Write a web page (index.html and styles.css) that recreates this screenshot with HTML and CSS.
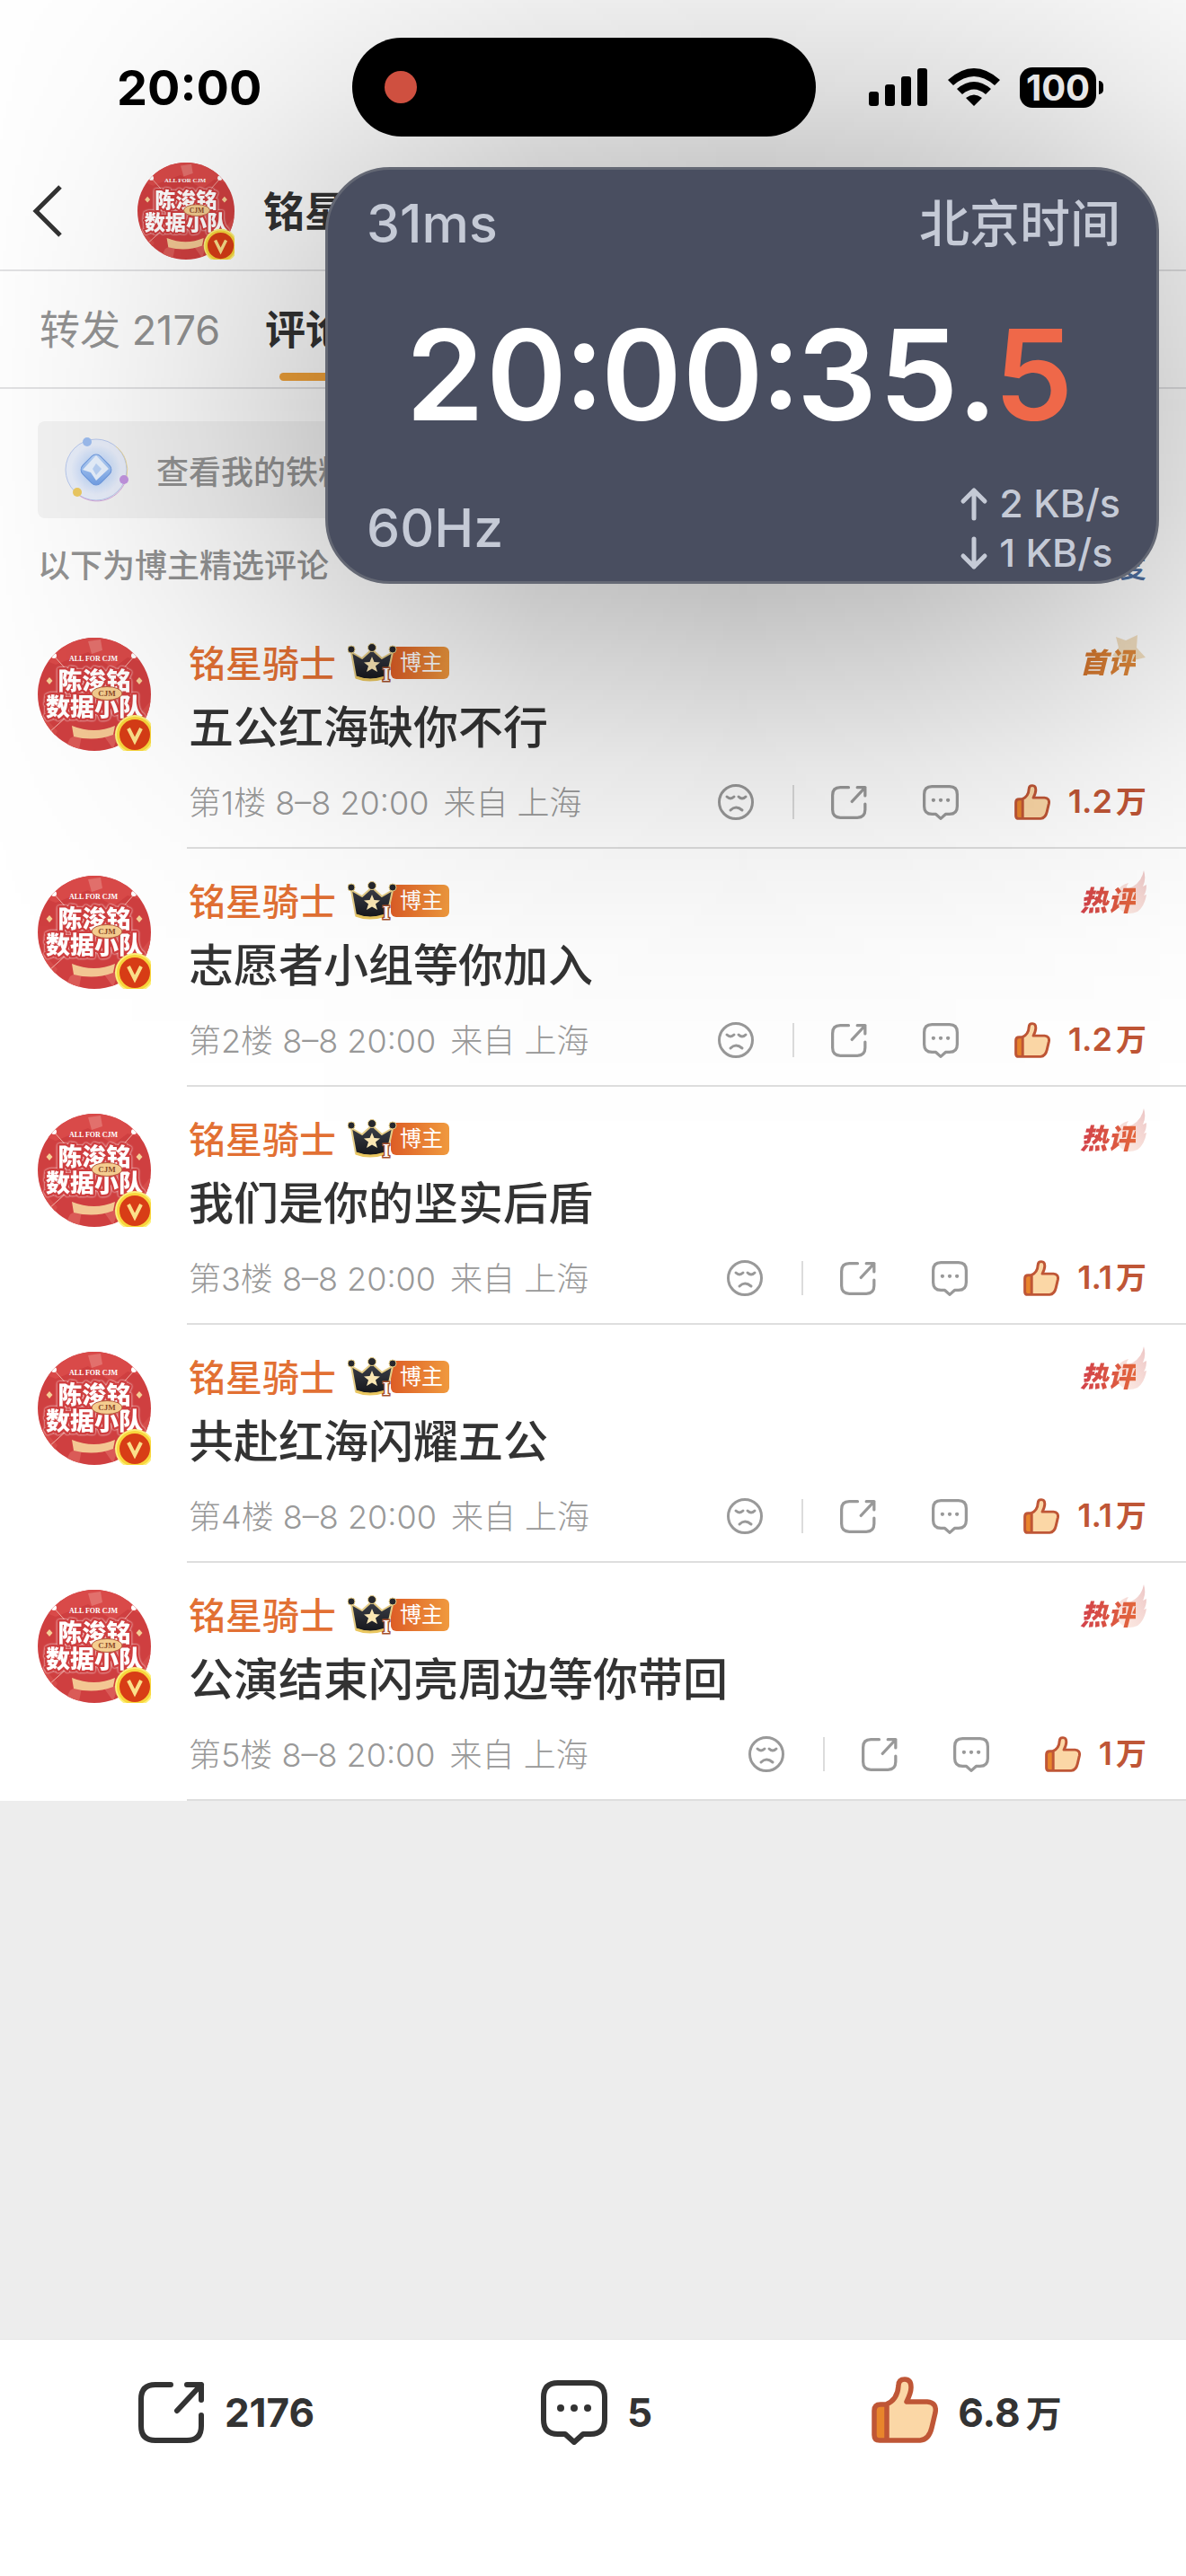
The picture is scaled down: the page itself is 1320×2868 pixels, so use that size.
FILE: index.html
```html
<!DOCTYPE html>
<html lang="zh-CN">
<head>
<meta charset="utf-8">
<meta name="viewport" content="width=device-width, initial-scale=1">
<title>评论</title>
<link rel="stylesheet" href="styles.css">
</head>
<body>
<svg class="sprite" aria-hidden="true">
  <defs>
    <linearGradient id="crownFill" x1="0" y1="0" x2="0" y2="1"><stop offset="0" stop-color="#3d4049"/><stop offset="1" stop-color="#15161b"/></linearGradient>
    <linearGradient id="flameFill" x1="1" y1="0" x2="0" y2="1"><stop offset="0" stop-color="#d98a8a" stop-opacity=".5"/><stop offset="1" stop-color="#f7b9a0" stop-opacity=".25"/></linearGradient>
    <linearGradient id="gemFill" x1="0" y1="0" x2="1" y2="1"><stop offset="0" stop-color="#c3dcfb"/><stop offset="1" stop-color="#6d9de8"/></linearGradient>
    <radialGradient id="gemGlow"><stop offset="0" stop-color="#8cb4f5"/><stop offset=".6" stop-color="#cfdff8"/><stop offset="1" stop-color="#e8eefa"/></radialGradient>
    <clipPath id="avatarClip"><circle cx="63" cy="63" r="63"/></clipPath>
  </defs>
  <symbol id="avatar" viewBox="0 0 126 126">
    <g clip-path="url(#avatarClip)">
      <rect width="126" height="126" fill="#cf3f40"/>
      <path d="M0 0H126V30L100 22 84 34 56 16 20 30 0 22Z" fill="#d94a49"/>
      <path d="M56 4 70 2 72 14 60 18Z" fill="#e2706c"/>
      <path d="M0 80 22 104 10 126H0ZM126 70 104 96 126 110Z" fill="#d64c4a"/>
      <path d="M36 112 50 104 46 124 32 120ZM74 110 90 106 84 124Z" fill="#da5b57"/>
      <path d="M16 18 34 38M108 20 92 38M12 106 32 88" stroke="#f0b3a8" stroke-width="1" fill="none"/>
      <circle cx="18" cy="20" r="3" fill="#fff"/><circle cx="107" cy="20" r="3" fill="#fff"/>
      <path d="M13 44 16.500 48 13 52 9.500 48ZM113 44 116.500 48 113 52 109.500 48Z" fill="#f5cf96"/>
      <g class="avatar-title"><text x="63" y="58" font-size="27">陈浚铭</text><text x="63" y="87" font-size="27">数据小队</text></g>
      <text x="62" y="26" class="avatar-latin" font-size="8" fill="#fff">ALL FOR CJM</text>
      <path d="M38 98Q63 108 86 98L84 108Q63 116 40 110Z" fill="#f3c793"/>
    </g>
    <ellipse cx="77" cy="62" rx="17" ry="7.500" fill="#f4cd8f" stroke="#b5573b" stroke-width="1"/>
    <text x="77" y="65" class="avatar-latin" font-size="9" fill="#8d4b2a">CJM</text>
    <circle cx="108" cy="108" r="22" fill="#fdf07c"/>
    <circle cx="108" cy="108" r="20" fill="#f8d63d"/>
    <circle cx="108" cy="108" r="17" fill="#d83d16"/>
    <path d="M101 101 108 115 115 101" fill="none" stroke="#fbe08a" stroke-width="4"/>
  </symbol>
  <symbol id="crown" viewBox="0 0 56 44">
    <path d="M4 10 9 38Q25 44 44 38L50 10 38 17 27 7 16 17Z" fill="url(#crownFill)" stroke="#e6cd87" stroke-width="2" stroke-linejoin="round"/>
    <g fill="#26272d" stroke="#e6cd87" stroke-width="1"><circle cx="4" cy="7" r="4"/><circle cx="27" cy="5" r="4.500"/><circle cx="50" cy="7" r="4"/></g>
    <path d="M9 38Q24 44 42 38" fill="none" stroke="#e9c65f" stroke-width="3"/>
    <path d="M27 15 29.500 21 36 21.500 31 25.500 33 32 27 28.500 21 32 23 25.500 18 21.500 24.500 21Z" fill="#fbe7b4"/>
    <text x="43" y="42" class="crown-level">I</text>
  </symbol>
  <symbol id="sad" viewBox="0 0 40 40">
    <g class="line line-thin"><circle cx="20" cy="20" r="18.500"/><path d="M10 14Q14 18 18 14M23 14Q27 18 31 14M14 29Q20 23 27 29"/></g>
  </symbol>
  <symbol id="share" viewBox="0 0 74 68">
    <path class="line" d="M36 3H19Q3 3 3 19V49Q3 65 19 65H54Q70 65 70 49V37M54 3H70V20M70 3 43 32"/>
  </symbol>
  <symbol id="bubble" viewBox="0 0 74 72">
    <path class="line" d="M19 3H55Q71 3 71 19V44Q71 60 55 60H47L37 69 27 60H19Q3 60 3 44V19Q3 3 19 3Z"/>
    <g fill="currentColor"><circle cx="22" cy="31" r="4"/><circle cx="37" cy="31" r="4"/><circle cx="52" cy="31" r="4"/></g>
  </symbol>
  <symbol id="thumb" viewBox="0 0 74 74">
    <path d="M3 38Q3 31 10 31H16Q29 26 30 10 30 3 37 3 44 3 44 12 44 18 39 28H62Q73 29 71 40L67 57Q64 70 54 71H9Q3 71 3 65Z" fill="#fbd7a6"/>
    <path d="M3 38Q3 31 10 31H17V71H9Q3 71 3 65Z" fill="#e8852c"/>
    <path d="M17 32V70M3 38Q3 31 10 31H16Q29 26 30 10 30 3 37 3 44 3 44 12 44 18 39 28H62Q73 29 71 40L67 57Q64 70 54 71H9Q3 71 3 65Z" fill="none" stroke="#bf5636" stroke-width="5.500" stroke-linejoin="round"/>
  </symbol>
  <symbol id="flame" viewBox="0 0 38 50">
    <path d="M35 0Q38 10 34 18L38 16Q38 24 35 28L38 27Q36 40 28 46 14 52 6 40 0 30 6 22 10 16 18 14 15 18 16 21 32 16 35 0Z" fill="url(#flameFill)"/>
  </symbol>
  <symbol id="star" viewBox="0 0 38 50">
    <path d="M4 5 15 9 28 3 27 17 37 28 23 31 17 42 10 31 0 26 7 17Z" fill="#e7c48d" fill-opacity=".55"/>
  </symbol>
</svg>

<main class="page">
  <div class="status">
    <span class="status-time">20:00</span>
    <div class="island"><span class="record-dot"></span></div>
    <div class="status-icons">
      <svg width="66" height="42" viewBox="0 0 66 42" aria-label="信号"><rect x="0" y="26" width="11" height="16" rx="3"/><rect x="18" y="18" width="11" height="24" rx="3"/><rect x="36" y="9" width="11" height="33" rx="3"/><rect x="54" y="0" width="11" height="42" rx="3"/></svg>
      <svg width="58" height="42" viewBox="0 0 58 42" aria-label="无线网络"><path d="M0 13Q29-13 58 13L52 19Q29-1 6 19ZM10 23Q29 7 48 23L42 29Q29 18 16 29ZM20 33Q29 26 38 33L29 42Z"/></svg>
      <span class="battery">100</span>
    </div>
  </div>

  <header class="nav">
    <button class="back" type="button" aria-label="返回"><svg width="32" height="58" viewBox="0 0 32 58"><path d="M30 2 3 29 30 56" fill="none" stroke="#333" stroke-width="5"/></svg></button>
    <svg class="nav-avatar"><use href="#avatar"/></svg>
    <h1 class="nav-name">铭星骑士</h1>
  </header>

  <nav class="tabs">
    <a class="tab" href="#reposts">转发 2176</a>
    <a class="tab tab-active" href="#comments">评论 5</a>
  </nav>

  <div class="banner-wrap">
    <a class="banner" href="#fans">
      <svg width="72" height="72" viewBox="0 0 72 72" aria-hidden="true">
        <circle cx="36" cy="36" r="34" fill="#e8eefa" stroke="#b9c9ee" stroke-width="1"/>
        <circle cx="36" cy="36" r="28" fill="url(#gemGlow)"/>
        <path d="M58 10A34 34 0 0 1 70 44" fill="none" stroke="#ead9a0" stroke-width="1"/>
        <path d="M70 44A34 34 0 0 1 15 63" fill="none" stroke="#d7a9dc" stroke-width="1"/>
        <rect x="22" y="22" width="28" height="28" rx="7" transform="rotate(45 36 36)" fill="url(#gemFill)" stroke="#6e9ae0" stroke-width="1"/>
        <path d="M36 20 50 35 36 48 30 39 21 36Z" fill="#e9f2fe"/><path d="M36 29 42 35 36 42 32 35Z" fill="#bcd4f7"/>
        <circle cx="26" cy="5" r="5" fill="#9dbdf0"/><circle cx="67" cy="47" r="5" fill="#c496e2"/><circle cx="15" cy="61" r="5" fill="#eecb63"/>
      </svg>
      <span>查看我的铁粉</span>
    </a>
  </div>

  <div class="sortbar"><span>以下为博主精选评论</span><button class="sort" type="button">按热度</button></div>

  <section class="comments" id="comments">
    <article class="comment">
      <svg class="comment-avatar"><use href="#avatar"/></svg>
      <div class="comment-body">
        <div class="comment-head"><span class="comment-name">铭星骑士</span><svg class="crown"><use href="#crown"/></svg><span class="owner">博主</span><span class="tag tag-first"><svg class="tag-art"><use href="#star"/></svg><span>首评</span></span></div>
        <p class="comment-text">五公红海缺你不行</p>
        <div class="comment-foot"><span class="meta">第1楼 8–8 20:00<span class="place">来自 上海</span></span><div class="actions">
          <button type="button" aria-label="不喜欢"><svg class="icon-sad"><use href="#sad"/></svg></button><span class="rule"></span>
          <button type="button" aria-label="转发"><svg class="icon-share"><use href="#share"/></svg></button>
          <button type="button" aria-label="回复"><svg class="icon-bubble"><use href="#bubble"/></svg></button>
          <button type="button" class="like"><svg class="icon-thumb"><use href="#thumb"/></svg><span>1.2<span class="wan">万</span></span></button></div></div>
      </div>
    </article>
    <article class="comment">
      <svg class="comment-avatar"><use href="#avatar"/></svg>
      <div class="comment-body">
        <div class="comment-head"><span class="comment-name">铭星骑士</span><svg class="crown"><use href="#crown"/></svg><span class="owner">博主</span><span class="tag"><svg class="tag-art"><use href="#flame"/></svg><span>热评</span></span></div>
        <p class="comment-text">志愿者小组等你加入</p>
        <div class="comment-foot"><span class="meta">第2楼 8–8 20:00<span class="place">来自 上海</span></span><div class="actions">
          <button type="button" aria-label="不喜欢"><svg class="icon-sad"><use href="#sad"/></svg></button><span class="rule"></span>
          <button type="button" aria-label="转发"><svg class="icon-share"><use href="#share"/></svg></button>
          <button type="button" aria-label="回复"><svg class="icon-bubble"><use href="#bubble"/></svg></button>
          <button type="button" class="like"><svg class="icon-thumb"><use href="#thumb"/></svg><span>1.2<span class="wan">万</span></span></button></div></div>
      </div>
    </article>
    <article class="comment">
      <svg class="comment-avatar"><use href="#avatar"/></svg>
      <div class="comment-body">
        <div class="comment-head"><span class="comment-name">铭星骑士</span><svg class="crown"><use href="#crown"/></svg><span class="owner">博主</span><span class="tag"><svg class="tag-art"><use href="#flame"/></svg><span>热评</span></span></div>
        <p class="comment-text">我们是你的坚实后盾</p>
        <div class="comment-foot"><span class="meta">第3楼 8–8 20:00<span class="place">来自 上海</span></span><div class="actions">
          <button type="button" aria-label="不喜欢"><svg class="icon-sad"><use href="#sad"/></svg></button><span class="rule"></span>
          <button type="button" aria-label="转发"><svg class="icon-share"><use href="#share"/></svg></button>
          <button type="button" aria-label="回复"><svg class="icon-bubble"><use href="#bubble"/></svg></button>
          <button type="button" class="like"><svg class="icon-thumb"><use href="#thumb"/></svg><span>1.1<span class="wan">万</span></span></button></div></div>
      </div>
    </article>
    <article class="comment">
      <svg class="comment-avatar"><use href="#avatar"/></svg>
      <div class="comment-body">
        <div class="comment-head"><span class="comment-name">铭星骑士</span><svg class="crown"><use href="#crown"/></svg><span class="owner">博主</span><span class="tag"><svg class="tag-art"><use href="#flame"/></svg><span>热评</span></span></div>
        <p class="comment-text">共赴红海闪耀五公</p>
        <div class="comment-foot"><span class="meta">第4楼 8–8 20:00<span class="place">来自 上海</span></span><div class="actions">
          <button type="button" aria-label="不喜欢"><svg class="icon-sad"><use href="#sad"/></svg></button><span class="rule"></span>
          <button type="button" aria-label="转发"><svg class="icon-share"><use href="#share"/></svg></button>
          <button type="button" aria-label="回复"><svg class="icon-bubble"><use href="#bubble"/></svg></button>
          <button type="button" class="like"><svg class="icon-thumb"><use href="#thumb"/></svg><span>1.1<span class="wan">万</span></span></button></div></div>
      </div>
    </article>
    <article class="comment">
      <svg class="comment-avatar"><use href="#avatar"/></svg>
      <div class="comment-body">
        <div class="comment-head"><span class="comment-name">铭星骑士</span><svg class="crown"><use href="#crown"/></svg><span class="owner">博主</span><span class="tag"><svg class="tag-art"><use href="#flame"/></svg><span>热评</span></span></div>
        <p class="comment-text">公演结束闪亮周边等你带回</p>
        <div class="comment-foot"><span class="meta">第5楼 8–8 20:00<span class="place">来自 上海</span></span><div class="actions">
          <button type="button" aria-label="不喜欢"><svg class="icon-sad"><use href="#sad"/></svg></button><span class="rule"></span>
          <button type="button" aria-label="转发"><svg class="icon-share"><use href="#share"/></svg></button>
          <button type="button" aria-label="回复"><svg class="icon-bubble"><use href="#bubble"/></svg></button>
          <button type="button" class="like"><svg class="icon-thumb"><use href="#thumb"/></svg><span>1<span class="wan">万</span></span></button></div></div>
      </div>
    </article>
  </section>

  <footer class="toolbar">
    <button type="button"><svg class="tool-share"><use href="#share"/></svg><span>2176</span></button>
    <button type="button"><svg class="tool-bubble"><use href="#bubble"/></svg><span>5</span></button>
    <button type="button"><svg class="tool-thumb"><use href="#thumb"/></svg><span>6.8<span class="wan">万</span></span></button>
  </footer>
</main>

<div class="clock-shade"></div>
<aside class="clock">
  <div class="clock-row"><span>31ms</span><span class="zone">北京时间</span></div>
  <div class="clock-time">20:00:35.<span class="clock-tenth">5</span></div>
  <div class="clock-row"><span>60Hz</span>
    <div class="net">
      <div class="net-line"><svg width="30" height="36" viewBox="0 0 30 36"><path d="M15 34V3M3 15 15 3 27 15"/></svg><span>2 KB/s</span></div>
      <div class="net-line"><svg width="30" height="36" viewBox="0 0 30 36"><path d="M15 2V33M3 21 15 33 27 21"/></svg><span>1 KB/s</span></div>
    </div>
  </div>
</aside>
</body>
</html>
```
FILE: styles.css
```css
* { box-sizing: border-box; }
body {
  position: relative;
  margin: 0;
  background: #fff;
  color: #333;
  font-family: Inter, "Noto Sans CJK SC", sans-serif;
}
button { border: 0; padding: 0; background: none; font: inherit; color: inherit; }
a { color: inherit; text-decoration: none; }
svg { display: block; flex: none; overflow: visible; }
.sprite { position: absolute; width: 0; height: 0; }
.page { display: flex; flex-direction: column; min-height: 100vh; background: #ededed; }

/* symbols */
.line { fill: none; stroke: currentColor; stroke-width: 6; stroke-linecap: round; stroke-linejoin: round; }
.line-thin { stroke-width: 3; }
.avatar-title {
  font-family: "Noto Sans CJK SC", sans-serif;
  font-weight: 900;
  text-anchor: middle;
  fill: #fff;
  stroke: #cf3f40;
  stroke-width: 5;
  stroke-linejoin: round;
  paint-order: stroke;
  filter: drop-shadow(0 0 1px #fff);
}
.avatar-latin { font-family: "Liberation Serif", serif; font-weight: 700; text-anchor: middle; }
.crown-level { font: 700 20px "Liberation Serif", serif; text-anchor: middle; fill: #fff; stroke: #a5502c; stroke-width: 3; paint-order: stroke; }

/* status bar */
.status {
  display: grid;
  grid-template-columns: 1fr 516px 1fr;
  align-items: center;
  height: 170px;
  padding: 42px 20px 18px 0;
  background: #fff;
}
.status-time { padding-left: 130px; font-size: 54px; font-weight: 700; color: #000; }
.island { position: relative; z-index: 3; display: flex; align-items: center; height: 110px; padding-left: 36px; border-radius: 55px; background: #000; }
.record-dot { width: 36px; height: 36px; border-radius: 50%; background: #cf5040; }
.status-icons { display: flex; align-items: center; justify-content: flex-end; gap: 22px; padding-right: 80px; }
.battery { position: relative; width: 85px; height: 45px; border-radius: 14px; background: #000; color: #fff; font-size: 40px; line-height: 45px; font-weight: 700; text-align: center; }
.battery::after { content: ""; position: absolute; left: 88px; top: 15px; width: 5px; height: 15px; border-radius: 0 5px 5px 0; background: #000; }

/* header */
.nav { display: flex; align-items: center; height: 132px; padding-left: 37px; border-bottom: 2px solid #e2e2e4; background: #fff; }
.back { width: 116px; }
.nav-avatar { width: 108px; height: 108px; margin-right: 32px; }
.nav-name { margin: 0; font-size: 46px; font-weight: 700; line-height: 60px; }
.tabs { display: flex; gap: 50px; height: 131px; padding-left: 44px; border-bottom: 2px solid #e2e2e4; background: #fff; }
.tab { position: relative; font-size: 45px; line-height: 131px; color: #939393; }
.tab-active { color: #333; font-weight: 700; }
.tab-active::after { content: ""; position: absolute; left: 16px; bottom: 7px; width: 72px; height: 9px; border-radius: 5px; background: #f2a33a; }

.banner-wrap { padding: 36px 42px 0; background: #fff; }
.banner { display: flex; align-items: center; gap: 31px; height: 108px; padding-left: 29px; border-radius: 8px; background: #f4f4f4; color: #939393; font-size: 36px; font-weight: 500; }
.sortbar { display: flex; align-items: center; justify-content: space-between; height: 103px; padding: 0 44px 4px 42px; background: #fff; color: #939393; font-size: 36px; font-weight: 500; }
.sort { color: #50709f; }

/* comments */
.comments { background: #fff; }
.comment { display: flex; gap: 40px; padding-left: 42px; }
.comment-avatar { width: 126px; height: 126px; margin-top: 30px; }
.comment-body { flex: 1; min-width: 0; height: 265px; padding: 28px 44px 0 2px; border-bottom: 2px solid #dedede; }
.comment-head { display: flex; align-items: center; height: 60px; }
.comment-name { margin-right: 13px; padding-bottom: 4px; font-size: 41px; font-weight: 500; color: #e27033; }
.crown { position: relative; z-index: 1; width: 56px; height: 44px; }
.owner { height: 36px; margin-left: -8px; padding: 0 7px 0 10px; border-radius: 6px; background: linear-gradient(90deg, #dd5d26, #f09a3e); color: #fff; font-size: 24px; line-height: 35px; }
.tag { position: relative; margin-left: auto; padding-right: 12px; font-size: 31px; line-height: 60px; font-weight: 900; font-style: italic; }
.tag > span { position: relative; background: linear-gradient(90deg, #d2414b, #e2663c) text; color: transparent; }
.tag-first > span { background: linear-gradient(90deg, #d5752d, #df8a3c) text; }
.tag-art { position: absolute; right: 0; top: -4px; width: 38px; height: 50px; }
.comment-text { margin: 6px 0 0; font-size: 50px; line-height: 72px; font-weight: 500; }
.comment-foot { display: flex; align-items: center; justify-content: space-between; height: 60px; margin-top: 17px; }
.meta { padding-bottom: 4px; font-size: 36px; font-weight: 300; color: #999; white-space: nowrap; }
.place { margin-left: 16px; }
.actions { display: flex; align-items: center; color: #999; }
.icon-sad { width: 40px; height: 40px; margin-right: 43px; }
.rule { width: 2px; height: 38px; margin-right: 41px; background: #dcdcdc; }
.icon-share { width: 40px; height: 37px; margin-right: 62px; }
.icon-bubble { width: 40px; height: 39px; margin-right: 62px; }
.like { display: flex; align-items: center; gap: 20px; font-size: 36px; line-height: 60px; font-weight: 600; color: #bf5636; }
.like > span { padding-bottom: 2px; }
.icon-thumb { width: 40px; height: 40px; }
.like .wan { margin-left: 4px; font-size: 34px; line-height: 1; }

/* bottom toolbar */
.toolbar { display: grid; grid-template-columns: repeat(3, 1fr); margin-top: auto; padding: 0 38px 100px 46px; background: #fff; border-top: 1px solid #e6e6e6; }
.toolbar button { display: flex; align-items: center; justify-content: center; gap: 22px; height: 163px; padding-bottom: 2px; font-size: 44px; line-height: 60px; font-weight: 700; }
.tool-share { width: 74px; height: 68px; }
.tool-bubble { width: 74px; height: 72px; }
.tool-thumb { width: 74px; height: 74px; margin-bottom: 6px; }
.toolbar .wan { margin-left: 6px; font-size: 40px; line-height: 1; }

/* soft shade that the floating clock casts on the page */
.clock-shade {
  position: absolute;
  z-index: 1;
  top: 0;
  left: 0;
  right: 0;
  height: 1280px;
  pointer-events: none;
  background: linear-gradient(
    rgba(0, 0, 0, .078) 0, rgba(0, 0, 0, .142) 100px, rgba(0, 0, 0, .21) 186px,
    rgba(0, 0, 0, .29) 300px, rgba(0, 0, 0, .34) 450px, rgba(0, 0, 0, .315) 560px,
    rgba(0, 0, 0, .26) 650px, rgba(0, 0, 0, .18) 750px, rgba(0, 0, 0, .107) 850px,
    rgba(0, 0, 0, .055) 950px, rgba(0, 0, 0, .023) 1050px, rgba(0, 0, 0, .008) 1150px,
    rgba(0, 0, 0, 0) 1280px);
  mask-image: linear-gradient(90deg,
    rgba(0, 0, 0, .03) 0, rgba(0, 0, 0, .11) 100px, rgba(0, 0, 0, .23) 200px,
    rgba(0, 0, 0, .39) 300px, rgba(0, 0, 0, .5) 362px, rgba(0, 0, 0, .65) 450px,
    rgba(0, 0, 0, .86) 600px, rgba(0, 0, 0, .965) calc(100% - 494px),
    rgba(0, 0, 0, .9) calc(100% - 320px), rgba(0, 0, 0, .74) calc(100% - 170px),
    rgba(0, 0, 0, .45) 100%);
}

/* floating clock */
.clock {
  position: absolute;
  z-index: 2;
  top: 186px;
  left: 362px;
  right: 30px;
  display: flex;
  flex-direction: column;
  justify-content: space-between;
  height: 464px;
  padding: 24px 40px 4px 43px;
  border: 3px solid #646874;
  border-radius: 72px;
  background: #494e60;
  color: #c5cad6;
  font-size: 59px;
  font-weight: 500;
}
.clock-row { display: flex; justify-content: space-between; align-items: center; line-height: 72px; }
.zone { font-size: 56px; }
.clock-time { padding: 16px 8px 0 0; color: #fff; font-size: 140px; font-weight: 600; line-height: 200px; text-align: center; font-variant-numeric: tabular-nums; white-space: nowrap; }
.clock-tenth { color: #ef6849; }
.net { font-size: 43px; line-height: 55px; }
.net-line { display: flex; align-items: center; gap: 13px; }
.net-line path { fill: none; stroke: currentColor; stroke-width: 5; stroke-linecap: round; stroke-linejoin: round; }
```
